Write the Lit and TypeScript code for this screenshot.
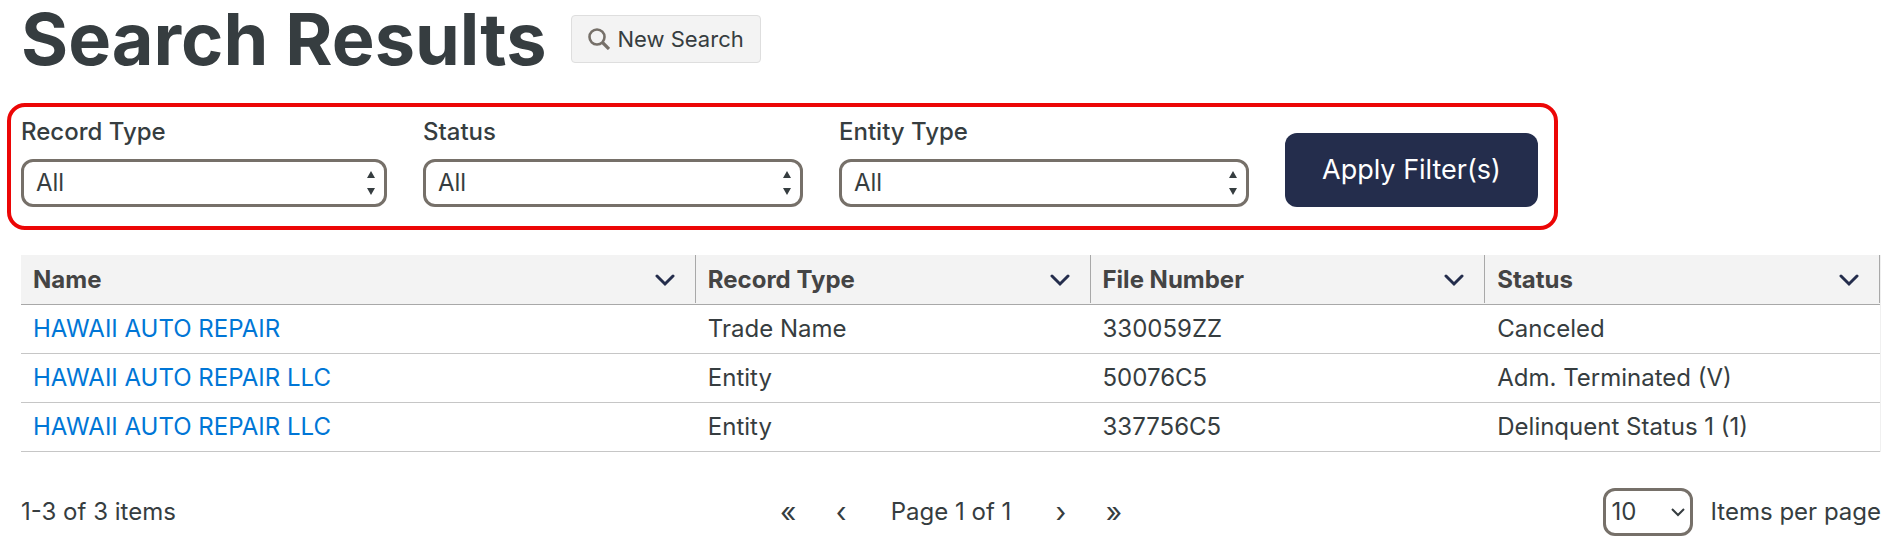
import { LitElement, html, css, svg } from "lit";
import { customElement, property } from "lit/decorators.js";

interface ResultRow {
  name: string;
  recordType: string;
  fileNumber: string;
  status: string;
}

const ROWS: ResultRow[] = [
  { name: "HAWAII AUTO REPAIR", recordType: "Trade Name", fileNumber: "330059ZZ", status: "Canceled" },
  { name: "HAWAII AUTO REPAIR LLC", recordType: "Entity", fileNumber: "50076C5", status: "Adm. Terminated (V)" },
  { name: "HAWAII AUTO REPAIR LLC", recordType: "Entity", fileNumber: "337756C5", status: "Delinquent Status 1 (1)" },
];

const COLUMNS = [
  { label: "Name", cls: "col-name" },
  { label: "Record Type", cls: "" },
  { label: "File Number", cls: "" },
  { label: "Status", cls: "" },
];

const chevron = svg`<path d="M2 2 L10 10 L18 2" fill="none" stroke="currentColor" stroke-width="3" stroke-linecap="round" stroke-linejoin="miter"/>`;

/** Labelled drop-down with a pair of up/down arrows. */
@customElement("filter-select")
export class FilterSelect extends LitElement {
  @property() label = "";

  static styles = css`
    :host {
      display: block;
      min-width: 0;
    }
    .field {
      display: grid;
      row-gap: 11px;
    }
    .label {
      line-height: 32px;
      font-weight: 500;
    }
    .box {
      display: grid;
      align-items: center;
    }
    .select,
    .arrows {
      grid-area: 1 / 1;
    }
    .select {
      appearance: none;
      box-sizing: border-box;
      width: 100%;
      height: 48px;
      padding: 0 32px 0 12px;
      border: 3px solid #767069;
      border-radius: 12px;
      background: #fff;
      color: inherit;
      font: inherit;
    }
    .arrows {
      justify-self: end;
      margin-right: 12px;
      pointer-events: none;
    }
  `;

  render() {
    return html`
      <div class="field">
        <label class="label" for="select">${this.label}</label>
        <div class="box">
          <select class="select" id="select"><option>All</option></select>
          <svg class="arrows" width="8" height="24" viewBox="0 0 8 24" aria-hidden="true">
            <path d="M0 7 L4 0 L8 7 Z M0 17 L4 24 L8 17 Z" fill="#363d40" />
          </svg>
        </div>
      </div>
    `;
  }
}

@customElement("app-root")
export class AppRoot extends LitElement {
  static styles = css`
    :host {
      display: block;
      color: #363d40;
      background: #fff;
      font: 24px/32px Inter, "Liberation Sans", sans-serif;
    }
    .head {
      display: flex;
      align-items: center;
      gap: 24px;
      padding: 0 21px;
    }
    .title {
      margin: 0;
      font-size: 72px;
      line-height: 78px;
      font-weight: 700;
    }
    .new-search {
      display: flex;
      align-items: center;
      gap: 8px;
      height: 48px;
      padding: 0 16px;
      border: 1px solid #dedede;
      border-radius: 4px;
      background: #f3f3f3;
      color: inherit;
      font: inherit;
      font-size: 22px;
      box-sizing: border-box;
    }
    .filters {
      display: flex;
      align-items: flex-end;
      gap: 36px;
      box-sizing: border-box;
      width: fit-content;
      max-width: calc(100% - 14px);
      margin: 25px 7px;
      padding: 9px 16px 19px 10px;
      border: 4px solid #ec0606;
      border-radius: 18px;
    }
    .record-type {
      width: 366px;
    }
    .status {
      width: 380px;
    }
    .entity-type {
      width: 410px;
    }
    .apply {
      flex: none;
      height: 74px;
      padding: 0 37px;
      border: 0;
      border-radius: 12px;
      background: #242d4c;
      color: #fff;
      font: inherit;
      font-size: 27px;
    }
    .results {
      margin: 0 10px 0 21px;
    }
    .table {
      width: 100%;
      table-layout: fixed;
      border-collapse: separate;
      border-spacing: 0;
      border-right: 1px solid #f0f0f0;
    }
    .th {
      height: 48px;
      padding: 0 0 1px;
      border-bottom: 1px solid #a8a8a8;
      background: #f3f3f3;
      color: #444;
      text-align: left;
      font-weight: 700;
    }
    .col-name {
      width: 36.3%;
    }
    .th-inner {
      display: flex;
      align-items: center;
      justify-content: space-between;
      box-sizing: border-box;
      height: 48px;
      padding: 2px 20px 0 12px;
      border-right: 1px solid #a8a8a8;
    }
    .sort {
      display: flex;
      padding: 0;
      border: 0;
      background: none;
      color: #242d4c;
    }
    .td {
      height: 48px;
      padding: 0 12px;
      border-bottom: 1px solid #c6c6c6;
    }
    .link {
      color: #0076d6;
      text-decoration: none;
    }
    .pager {
      display: grid;
      grid-template-columns: 1fr auto 1fr;
      align-items: center;
      margin-top: 36px;
    }
    .pages {
      display: flex;
      align-items: center;
    }
    .nav {
      width: 53px;
      height: 48px;
      padding: 0;
      border: 0;
      background: none;
      color: inherit;
      font: inherit;
      font-size: 28px;
    }
    .page-text {
      padding: 0 23px;
    }
    .size {
      display: flex;
      align-items: center;
      justify-self: end;
      gap: 18px;
    }
    .size-box {
      display: grid;
      align-items: center;
    }
    .size-select,
    .size-arrow {
      grid-area: 1 / 1;
    }
    .size-select {
      appearance: none;
      box-sizing: border-box;
      width: 90px;
      height: 48px;
      padding: 0 24px 0 6px;
      border: 3px solid #767069;
      border-radius: 12px;
      background: #fff;
      color: inherit;
      font: inherit;
    }
    .size-arrow {
      justify-self: end;
      margin-right: 8px;
      pointer-events: none;
    }
  `;

  render() {
    return html`
      <header class="head">
        <h1 class="title">Search Results</h1>
        <button class="new-search" type="button">
          <svg width="22" height="22" viewBox="0 0 22 22" fill="none" stroke="#767069" aria-hidden="true">
            <circle cx="9" cy="9" r="7.5" stroke-width="2.6" />
            <path d="M14.5 14.5 L21 21" stroke-width="3.2" />
          </svg>
          New Search
        </button>
      </header>

      <form class="filters">
        <filter-select class="record-type" label="Record Type"></filter-select>
        <filter-select class="status" label="Status"></filter-select>
        <filter-select class="entity-type" label="Entity Type"></filter-select>
        <button class="apply" type="button">Apply Filter(s)</button>
      </form>

      <main class="results">
        <table class="table">
          <thead>
            <tr>
              ${COLUMNS.map(
                (c) => html`<th class="th ${c.cls}" scope="col">
                  <div class="th-inner">
                    ${c.label}
                    <button class="sort" type="button" aria-label="${c.label} options">
                      <svg width="20" height="13" viewBox="0 0 20 13" aria-hidden="true">${chevron}</svg>
                    </button>
                  </div>
                </th>`
              )}
            </tr>
          </thead>
          <tbody>
            ${ROWS.map(
              (r) => html`<tr>
                <td class="td"><a class="link" href="#">${r.name}</a></td>
                <td class="td">${r.recordType}</td>
                <td class="td">${r.fileNumber}</td>
                <td class="td">${r.status}</td>
              </tr>`
            )}
          </tbody>
        </table>

        <footer class="pager">
          <span>1-3 of 3 items</span>
          <nav class="pages" aria-label="Pagination">
            <button class="nav" type="button" aria-label="First page">«</button>
            <button class="nav" type="button" aria-label="Previous page">‹</button>
            <span class="page-text">Page 1 of 1</span>
            <button class="nav" type="button" aria-label="Next page">›</button>
            <button class="nav" type="button" aria-label="Last page">»</button>
          </nav>
          <div class="size">
            <div class="size-box">
              <select class="size-select" id="page-size"><option>10</option></select>
              <svg class="size-arrow" width="14" height="9" viewBox="0 0 14 9" aria-hidden="true">
                <path d="M1 1 L7 7 L13 1" fill="none" stroke="#363d40" stroke-width="2" />
              </svg>
            </div>
            <label for="page-size">Items per page</label>
          </div>
        </footer>
      </main>
    `;
  }
}
